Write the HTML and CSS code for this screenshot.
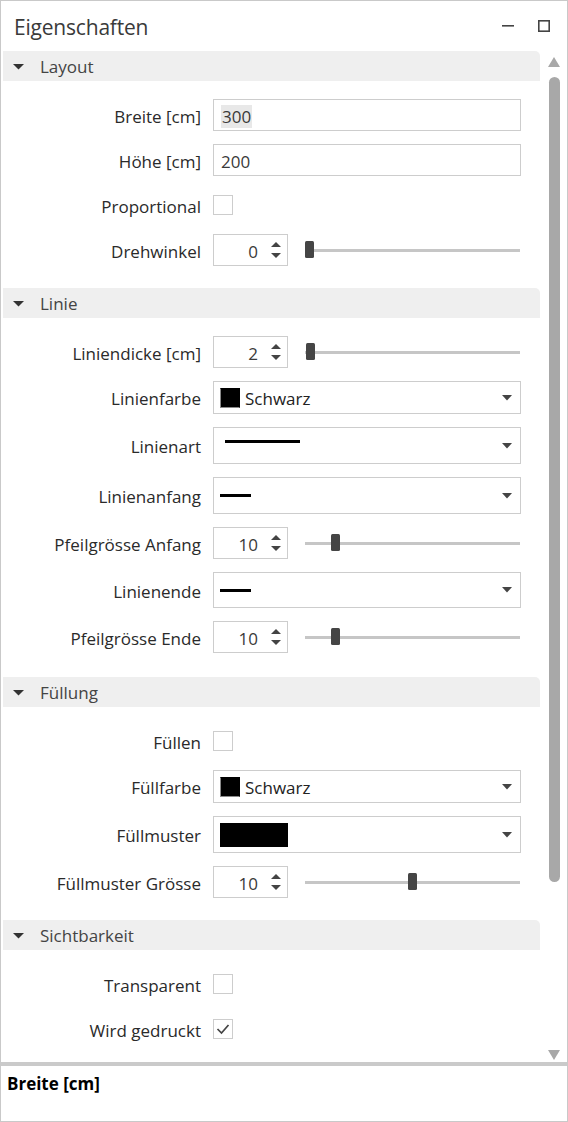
FILE: index.html
```html
<!DOCTYPE html>
<html lang="de">
<head>
<meta charset="utf-8">
<title>Eigenschaften</title>
<link rel="stylesheet" href="styles.css">
</head>
<body>
<div class="panel">
  <header class="titlebar">
    <span class="title">Eigenschaften</span>
    <span class="win-btns">
      <svg class="btn-min" width="12" height="12" viewBox="0 0 12 12"><rect x="0" y="5" width="12" height="1.6" fill="#444"/></svg>
      <svg class="btn-max" width="12" height="12" viewBox="0 0 12 12"><rect x="0.8" y="0.8" width="10.4" height="10.4" fill="none" stroke="#444" stroke-width="1.6"/></svg>
    </span>
  </header>

  <div class="main">
    <div class="content">

      <section class="group">
        <div class="group-head"><svg class="caret" width="11" height="6" viewBox="0 0 11 6"><polygon points="0,0 11,0 5.5,5.5" fill="#333"/></svg><span>Layout</span></div>
        <div class="group-body">
          <div class="row"><span class="label">Breite [cm]</span><div class="textbox"><span class="sel">300</span></div></div>
          <div class="row"><span class="label">Höhe [cm]</span><div class="textbox">200</div></div>
          <div class="row"><span class="label">Proportional</span><div class="cell"><span class="checkbox"></span></div></div>
          <div class="row"><span class="label">Drehwinkel</span>
            <div class="cell">
              <div class="spinner"><span class="num">0</span><svg class="spin" width="12" height="18" viewBox="0 0 12 18"><polygon points="1,6 6,1 11,6" fill="#444"/><polygon points="1,12 11,12 6,17" fill="#444"/></svg></div>
              <div class="slider"><div class="track"></div><div class="thumb" style="left:0px"></div></div>
            </div>
          </div>
        </div>
      </section>

      <section class="group">
        <div class="group-head"><svg class="caret" width="11" height="6" viewBox="0 0 11 6"><polygon points="0,0 11,0 5.5,5.5" fill="#333"/></svg><span>Linie</span></div>
        <div class="group-body linie">
          <div class="row"><span class="label">Liniendicke [cm]</span>
            <div class="cell">
              <div class="spinner"><span class="num">2</span><svg class="spin" width="12" height="18" viewBox="0 0 12 18"><polygon points="1,6 6,1 11,6" fill="#444"/><polygon points="1,12 11,12 6,17" fill="#444"/></svg></div>
              <div class="slider"><div class="track"></div><div class="thumb" style="left:1px"></div></div>
            </div>
          </div>
          <div class="row"><span class="label">Linienfarbe</span>
            <div class="combo h33"><span class="swatch"></span><span class="combo-text">Schwarz</span><svg class="drop" width="10" height="6" viewBox="0 0 10 6"><polygon points="0,0 10,0 5,5.5" fill="#444"/></svg></div>
          </div>
          <div class="row"><span class="label">Linienart</span>
            <div class="combo h37"><span class="line long"></span><svg class="drop" width="10" height="6" viewBox="0 0 10 6"><polygon points="0,0 10,0 5,5.5" fill="#444"/></svg></div>
          </div>
          <div class="row"><span class="label">Linienanfang</span>
            <div class="combo h37"><span class="line short"></span><svg class="drop" width="10" height="6" viewBox="0 0 10 6"><polygon points="0,0 10,0 5,5.5" fill="#444"/></svg></div>
          </div>
          <div class="row"><span class="label">Pfeilgrösse Anfang</span>
            <div class="cell">
              <div class="spinner"><span class="num">10</span><svg class="spin" width="12" height="18" viewBox="0 0 12 18"><polygon points="1,6 6,1 11,6" fill="#444"/><polygon points="1,12 11,12 6,17" fill="#444"/></svg></div>
              <div class="slider"><div class="track"></div><div class="thumb" style="left:26px"></div></div>
            </div>
          </div>
          <div class="row"><span class="label">Linienende</span>
            <div class="combo h36"><span class="line short"></span><svg class="drop" width="10" height="6" viewBox="0 0 10 6"><polygon points="0,0 10,0 5,5.5" fill="#444"/></svg></div>
          </div>
          <div class="row"><span class="label">Pfeilgrösse Ende</span>
            <div class="cell">
              <div class="spinner"><span class="num">10</span><svg class="spin" width="12" height="18" viewBox="0 0 12 18"><polygon points="1,6 6,1 11,6" fill="#444"/><polygon points="1,12 11,12 6,17" fill="#444"/></svg></div>
              <div class="slider"><div class="track"></div><div class="thumb" style="left:26px"></div></div>
            </div>
          </div>
        </div>
      </section>

      <section class="group">
        <div class="group-head"><svg class="caret" width="11" height="6" viewBox="0 0 11 6"><polygon points="0,0 11,0 5.5,5.5" fill="#333"/></svg><span>Füllung</span></div>
        <div class="group-body">
          <div class="row"><span class="label">Füllen</span><div class="cell"><span class="checkbox"></span></div></div>
          <div class="row"><span class="label">Füllfarbe</span>
            <div class="combo h33"><span class="swatch"></span><span class="combo-text">Schwarz</span><svg class="drop" width="10" height="6" viewBox="0 0 10 6"><polygon points="0,0 10,0 5,5.5" fill="#444"/></svg></div>
          </div>
          <div class="row"><span class="label">Füllmuster</span>
            <div class="combo h37"><span class="pattern"></span><svg class="drop" width="10" height="6" viewBox="0 0 10 6"><polygon points="0,0 10,0 5,5.5" fill="#444"/></svg></div>
          </div>
          <div class="row"><span class="label">Füllmuster Grösse</span>
            <div class="cell">
              <div class="spinner"><span class="num">10</span><svg class="spin" width="12" height="18" viewBox="0 0 12 18"><polygon points="1,6 6,1 11,6" fill="#444"/><polygon points="1,12 11,12 6,17" fill="#444"/></svg></div>
              <div class="slider"><div class="track"></div><div class="thumb" style="left:103px"></div></div>
            </div>
          </div>
        </div>
      </section>

      <section class="group">
        <div class="group-head"><svg class="caret" width="11" height="6" viewBox="0 0 11 6"><polygon points="0,0 11,0 5.5,5.5" fill="#333"/></svg><span>Sichtbarkeit</span></div>
        <div class="group-body">
          <div class="row"><span class="label">Transparent</span><div class="cell"><span class="checkbox"></span></div></div>
          <div class="row"><span class="label">Wird gedruckt</span><div class="cell"><span class="checkbox"><svg width="18" height="18" viewBox="0 0 18 18"><polyline points="3.5,9 7.5,13 14.5,5" fill="none" stroke="#444" stroke-width="1.7"/></svg></span></div></div>
        </div>
      </section>

    </div>
    <div class="scrollbar">
      <svg class="sb-up" width="12" height="10" viewBox="0 0 12 10"><polygon points="0,10 6,0 12,10" fill="#a8a8a8"/></svg>
      <div class="sb-thumb"></div>
      <svg class="sb-down" width="12" height="10" viewBox="0 0 12 10"><polygon points="0,0 12,0 6,10" fill="#a8a8a8"/></svg>
    </div>
  </div>

  <div class="divider"></div>
  <div class="desc">Breite [cm]</div>
</div>
</body>
</html>
```

FILE: styles.css
```css
html, body {
  margin: 0;
  padding: 0;
  background: #ffffff;
}

body {
  font-family: "Open Sans", "Noto Sans", "Liberation Sans", sans-serif;
  color: #2a2a2a;
}

.panel {
  width: 568px;
  height: 1122px;
  box-sizing: border-box;
  border: 1px solid #c9c9c9;
  display: flex;
  flex-direction: column;
  overflow: hidden;
}

/* title bar */
.titlebar {
  flex: none;
  height: 50px;
  display: flex;
  align-items: center;
  justify-content: space-between;
  padding: 0 17px 0 13px;
}

.title {
  font-size: 21px;
  color: #3a3a3a;
  letter-spacing: -0.2px;
  padding-top: 1px;
}

.win-btns {
  display: flex;
  align-items: center;
  gap: 24px;
}

.win-btns svg {
  display: block;
}

/* main area */
.main {
  flex: none;
  height: 1011px;
  display: flex;
}

.content {
  width: 537px;
  margin-left: 2px;
  overflow: hidden;
}

.group-head {
  height: 30px;
  background: #efefef;
  border-radius: 0 5px 0 0;
  display: flex;
  align-items: center;
  padding-left: 10px;
  font-size: 17px;
  color: #444;
}

.group-head span {
  padding-top: 1px;
}

.caret {
  display: block;
  margin-right: 16px;
  margin-top: 1px;
}

.group-body {
  display: flex;
  flex-direction: column;
  gap: 13px;
  padding: 18px 0 22px;
}

.group-body.linie {
  padding-bottom: 24px;
}

.row {
  display: grid;
  grid-template-columns: 198px 308px;
  column-gap: 12px;
  align-items: center;
  min-height: 32px;
}

.label {
  text-align: right;
  font-size: 17px;
  color: #2a2a2a;
  white-space: nowrap;
  padding-top: 2px;
}

.cell {
  display: flex;
  align-items: center;
  height: 32px;
}

/* text box */
.textbox {
  box-sizing: border-box;
  height: 32px;
  border: 1px solid #cdcdcd;
  display: flex;
  align-items: center;
  padding-left: 7px;
  padding-top: 2px;
  font-size: 17px;
  color: #3a3a3a;
}

.sel {
  background: #e8e8e8;
  padding: 0 1px;
}

/* checkbox */
.checkbox {
  box-sizing: border-box;
  width: 20px;
  height: 20px;
  border: 1px solid #cdcdcd;
  display: block;
}

.checkbox svg {
  display: block;
}

/* spinner */
.spinner {
  box-sizing: border-box;
  width: 75px;
  height: 32px;
  border: 1px solid #cdcdcd;
  display: flex;
  align-items: center;
  justify-content: flex-end;
  padding-right: 5px;
  font-size: 17px;
  color: #3a3a3a;
  flex: none;
}

.spinner .num {
  margin-right: 12px;
  padding-top: 2px;
}

.spin {
  display: block;
}

/* slider */
.slider {
  position: relative;
  width: 215px;
  height: 18px;
  margin-left: 17px;
  display: flex;
  align-items: center;
}

.track {
  width: 100%;
  height: 3px;
  background: #c6c6c6;
}

.thumb {
  position: absolute;
  top: 0;
  width: 9px;
  height: 17px;
  background: #454545;
  border-radius: 1.5px;
}

/* combo box */
.combo {
  box-sizing: border-box;
  border: 1px solid #cdcdcd;
  display: flex;
  align-items: center;
  padding-left: 6px;
  padding-right: 8px;
  font-size: 17px;
  color: #2a2a2a;
}

.combo.h33 { height: 33px; }
.combo.h36 { height: 36px; }
.combo.h37 { height: 37px; }

.drop {
  display: block;
  margin-left: auto;
}

.swatch {
  box-sizing: border-box;
  width: 20px;
  height: 20px;
  background: #000;
  border: 1px solid #8a8a8a;
  border-top-color: #000;
  border-right-color: #000;
  margin-right: 5px;
  flex: none;
}

.combo-text {
  color: #222;
  padding-top: 2px;
}

.line {
  display: block;
  height: 3px;
  background: #000;
}

.line.long {
  width: 75px;
  margin-left: 5px;
  margin-top: -8px;
}

.line.short {
  width: 31px;
}

.pattern {
  display: block;
  width: 68px;
  height: 24px;
  background: #000;
}

/* scrollbar */
.scrollbar {
  width: 12px;
  margin-left: 8px;
  display: flex;
  flex-direction: column;
  align-items: center;
  padding-top: 6px;
}

.scrollbar svg {
  display: block;
  flex: none;
}

.sb-thumb {
  width: 11px;
  height: 805px;
  margin-top: 10px;
  background: #a8a8a8;
  border-radius: 6px;
}

.sb-down {
  margin-top: 168px;
}

/* description area */
.divider {
  flex: none;
  height: 4px;
  background: #cacaca;
}

.desc {
  padding: 6px 6px;
  font-size: 17px;
  font-weight: 700;
  color: #000;
}
```
